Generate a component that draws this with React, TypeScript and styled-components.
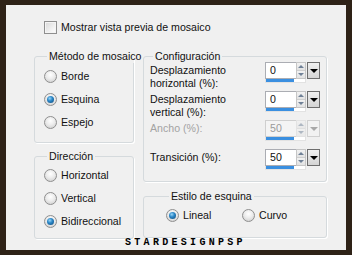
import React from "react";
import styled, { createGlobalStyle, css } from "styled-components";

const Global = createGlobalStyle`
  html, body { margin: 0; padding: 0; background: #2e2217; }
  body { font-family: "Liberation Sans", Arial, sans-serif; font-size: 10.6px; color: #111111; }
`;

const Frame = styled.div`
  width: 352px;
  height: 255px;
  box-sizing: border-box;
  padding: 5px 6px 5px 6px;
  background: #2e2217;
`;

const Panel = styled.div`
  position: relative;
  height: 245px;
  background: #f0f0f0;
  padding: 15px 0 0 0;
  box-sizing: border-box;
`;

const CheckRow = styled.label`
  display: flex;
  align-items: center;
  gap: 4px;
  height: 14px;
  padding-left: 38px;
  line-height: 14px;
`;

const CheckBox = styled.span`
  width: 13px;
  height: 13px;
  box-sizing: border-box;
  border: 1px solid #8f8f8f;
  background: linear-gradient(135deg, #d8d8d8 0%, #f4f4f4 70%, #ffffff 100%);
  box-shadow: inset 0 0 0 1px #f4f4f4;
  flex: none;
`;

const Columns = styled.div`
  display: grid;
  grid-template-columns: 100px 184px;
  column-gap: 9px;
  margin-top: 15px;
  padding-left: 28px;
`;

const Stack = styled.div<{ $gap: number }>`
  display: flex;
  flex-direction: column;
  gap: ${(p) => p.$gap}px;
`;

const Group = styled.fieldset<{ $h: number; $pt?: number; $pl?: number }>`
  margin: 0;
  min-width: 0;
  box-sizing: border-box;
  height: ${(p) => p.$h}px;
  border: 1px solid #d5dadd;
  border-radius: 3px;
  box-shadow: 1px 1px 0 #ffffff;
  padding: ${(p) => p.$pt ?? 5}px 6px 0 ${(p) => p.$pl ?? 9}px;
`;

const Legend = styled.legend`
  padding: 0 2px;
  margin-left: 3px;
  line-height: 14px;
  white-space: nowrap;
`;

const RadioList = styled.div`
  display: flex;
  flex-direction: column;
  gap: 9px;
`;

const RadioRow = styled.label<{ $w?: number }>`
  display: flex;
  align-items: center;
  gap: 4px;
  height: 14px;
  line-height: 14px;
  ${(p) => p.$w && css`width: ${p.$w}px;`}
`;

const RadioDot = styled.span<{ $checked?: boolean }>`
  position: relative;
  width: 13px;
  height: 13px;
  flex: none;
  box-sizing: border-box;
  border-radius: 50%;
  border: 1px solid #8f8f8f;
  background: radial-gradient(circle at 50% 35%, #ffffff 0%, #ececec 45%, #c9c9c9 100%);
  ${(p) =>
    p.$checked &&
    css`
      &::after {
        content: "";
        position: absolute;
        left: 2px;
        top: 2px;
        width: 7px;
        height: 7px;
        border-radius: 50%;
        background: radial-gradient(circle at 40% 35%, #9ad6f7 0%, #2c88c8 40%, #0d4677 100%);
      }
    `}
`;

const InlineRadios = styled.div`
  display: flex;
`;

const ConfigRows = styled.div`
  display: flex;
  flex-direction: column;
  gap: 8px;
  margin-top: -1px;
`;

const ConfigRow = styled.div`
  display: flex;
  align-items: flex-start;
  justify-content: space-between;
  height: 21px;
`;

const RowLabel = styled.div<{ $disabled?: boolean }>`
  line-height: 13px;
  padding-top: 2px;
  color: ${(p) => (p.$disabled ? "#a3a3a3" : "#111111")};
  white-space: nowrap;
`;

const Spin = styled.div`
  display: flex;
  flex-direction: column;
  width: 55px;
  flex: none;
`;

const SpinTop = styled.div`
  display: flex;
  height: 17px;
`;

const NumberBox = styled.div<{ $disabled?: boolean }>`
  width: 32px;
  box-sizing: border-box;
  border: 1px solid ${(p) => (p.$disabled ? "#cfcfcf" : "#abadb3")};
  border-right: none;
  background: ${(p) => (p.$disabled ? "#f4f4f4" : "#ffffff")};
  color: ${(p) => (p.$disabled ? "#9a9a9a" : "#111111")};
  padding-left: 4px;
  line-height: 15px;
`;

const Arrows = styled.div<{ $disabled?: boolean }>`
  width: 10px;
  display: flex;
  flex-direction: column;
  box-sizing: border-box;
  border: 1px solid ${(p) => (p.$disabled ? "#d8d8d8" : "#c6c6c6")};
  background: #f6f6f6;
  opacity: ${(p) => (p.$disabled ? 0.5 : 1)};
`;

const Arrow = styled.span<{ $down?: boolean }>`
  flex: 1;
  display: flex;
  align-items: center;
  justify-content: center;
  background: linear-gradient(#f2f2f2, #e2e2e2);
  ${(p) => !p.$down && css`border-bottom: 1px solid #cfcfcf;`}
  &::before {
    content: "";
    border-left: 3px solid transparent;
    border-right: 3px solid transparent;
    ${(p) =>
      p.$down
        ? css`border-top: 3px solid #6f8096;`
        : css`border-bottom: 3px solid #6f8096;`}
  }
`;

const Drop = styled.div<{ $disabled?: boolean }>`
  width: 13px;
  margin-left: 1px;
  box-sizing: border-box;
  border: 1px solid ${(p) => (p.$disabled ? "#d0d0d0" : "#6e6e6e")};
  background: ${(p) => (p.$disabled ? "#f2f2f2" : "linear-gradient(#f0f0f0, #d4d4d4)")};
  display: flex;
  align-items: center;
  justify-content: center;
  &::before {
    content: "";
    border-left: 4px solid transparent;
    border-right: 4px solid transparent;
    border-top: 4px solid ${(p) => (p.$disabled ? "#a8a8a8" : "#000000")};
  }
`;

const Track = styled.div`
  width: 41px;
  height: 4px;
  background: #ffffff;
  box-sizing: border-box;
  border: 1px solid #e2e2e2;
  border-top: none;
  display: flex;
`;

const Fill = styled.div`
  height: 100%;
  background: #3a8fe0;
`;

const Watermark = styled.div`
  position: absolute;
  left: 119px;
  top: 232px;
  font-family: "Liberation Mono", "DejaVu Sans Mono", monospace;
  font-weight: bold;
  font-size: 10px;
  line-height: 12px;
  letter-spacing: 3.3px;
  color: #000000;
`;

type SpinProps = { value: string; disabled?: boolean };

const SpinField = ({ value, disabled }: SpinProps) => (
  <Spin>
    <SpinTop>
      <NumberBox $disabled={disabled}>{value}</NumberBox>
      <Arrows $disabled={disabled}>
        <Arrow />
        <Arrow $down />
      </Arrows>
      <Drop $disabled={disabled} />
    </SpinTop>
    <Track>
      <Fill style={{ width: 28 }} />
    </Track>
  </Spin>
);

const Radio = ({ label, checked, w }: { label: string; checked?: boolean; w?: number }) => (
  <RadioRow $w={w}>
    <RadioDot $checked={checked} />
    {label}
  </RadioRow>
);

export default function App() {
  return (
    <>
      <Global />
      <Frame>
        <Panel>
          <CheckRow>
            <CheckBox />
            Mostrar vista previa de mosaico
          </CheckRow>
          <Columns>
            <Stack $gap={6}>
              <Group $h={94} $pt={6}>
                <Legend>Método de mosaico</Legend>
                <RadioList>
                  <Radio label="Borde" />
                  <Radio label="Esquina" checked />
                  <Radio label="Espejo" />
                </RadioList>
              </Group>
              <Group $h={90}>
                <Legend>Dirección</Legend>
                <RadioList>
                  <Radio label="Horizontal" />
                  <Radio label="Vertical" />
                  <Radio label="Bidireccional" checked />
                </RadioList>
              </Group>
            </Stack>
            <Stack $gap={7}>
              <Group $h={133} $pt={0} $pl={6}>
                <Legend>Configuración</Legend>
                <ConfigRows>
                  <ConfigRow>
                    <RowLabel>
                      Desplazamiento
                      <br />
                      horizontal (%):
                    </RowLabel>
                    <SpinField value="0" />
                  </ConfigRow>
                  <ConfigRow>
                    <RowLabel>
                      Desplazamiento
                      <br />
                      vertical (%):
                    </RowLabel>
                    <SpinField value="0" />
                  </ConfigRow>
                  <ConfigRow>
                    <RowLabel $disabled>Ancho (%):</RowLabel>
                    <SpinField value="50" disabled />
                  </ConfigRow>
                  <ConfigRow>
                    <RowLabel>Transición (%):</RowLabel>
                    <SpinField value="50" />
                  </ConfigRow>
                </ConfigRows>
              </Group>
              <Group $h={49} $pl={22}>
                <Legend>Estilo de esquina</Legend>
                <InlineRadios>
                  <Radio label="Lineal" checked w={76} />
                  <Radio label="Curvo" />
                </InlineRadios>
              </Group>
            </Stack>
          </Columns>
          <Watermark>STARDESIGNPSP</Watermark>
        </Panel>
      </Frame>
    </>
  );
}
